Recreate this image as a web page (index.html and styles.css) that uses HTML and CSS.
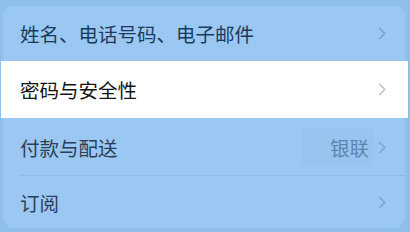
FILE: index.html
```html
<!DOCTYPE html>
<html lang="zh-CN">
<head>
    <meta charset="UTF-8">
    <title>设置</title>
    <link rel="stylesheet" href="styles.css">
</head>
<body>
    <!-- 设置列表 -->
    <div class="card">
        <div class="row">
            <span class="label">姓名、电话号码、电子邮件</span>
            <svg class="chevron" width="8" height="13" viewBox="0 0 8 13"><path d="M1.2 1 L6.8 6.5 L1.2 12" fill="none" stroke="currentColor" stroke-width="1.6"/></svg>
        </div>
        <div class="row active">
            <span class="label">密码与安全性</span>
            <svg class="chevron" width="8" height="13" viewBox="0 0 8 13"><path d="M1.2 1 L6.8 6.5 L1.2 12" fill="none" stroke="currentColor" stroke-width="1.6"/></svg>
        </div>
        <div class="row sep">
            <span class="label">付款与配送</span>
            <span class="value">银联</span>
            <svg class="chevron" width="8" height="13" viewBox="0 0 8 13"><path d="M1.2 1 L6.8 6.5 L1.2 12" fill="none" stroke="currentColor" stroke-width="1.6"/></svg>
        </div>
        <div class="row last">
            <span class="label">订阅</span>
            <svg class="chevron" width="8" height="13" viewBox="0 0 8 13"><path d="M1.2 1 L6.8 6.5 L1.2 12" fill="none" stroke="currentColor" stroke-width="1.6"/></svg>
        </div>
    </div>
</body>
</html>
```

FILE: styles.css
```css
body {
    margin: 0;
    padding: 6px 5px 3px 3px;
    background: #90bfea;
    font-family: "Noto Sans CJK SC", "Noto Sans", sans-serif;
    height: 232px;
    box-sizing: border-box;
    overflow: hidden;
}

.card {
    background: #9ac8f2;
    border-radius: 11px;
    display: flex;
    flex-direction: column;
}

.row {
    display: flex;
    align-items: center;
    height: 55px;
    padding: 0 19px 0 17px;
    font-size: 19.5px;
    color: #1d3a5c;
}

.row.active {
    height: 57px;
    background: #ffffff;
    color: #151515;
    margin: 0 -3px 0 -2px;
    padding: 0 22px 0 19px;
}

.row.active .chevron {
    color: #c3c3c3;
}

.row.sep {
    height: 58px;
    position: relative;
    color: #2b3f57;
}

.row.sep::after {
    content: "";
    position: absolute;
    left: 17px;
    right: 0;
    bottom: 0;
    height: 1px;
    background: #8fbbe4;
}

.row.last {
    height: 52px;
    color: #2b3f57;
}

.label {
    flex: 1;
}

.value {
    color: #5c85ad;
    background: #97c5ef;
    padding: 4px 5px 4px 28px;
    margin-right: 4px;
}

.chevron {
    color: #7aa3cb;
    flex: none;
}
```
